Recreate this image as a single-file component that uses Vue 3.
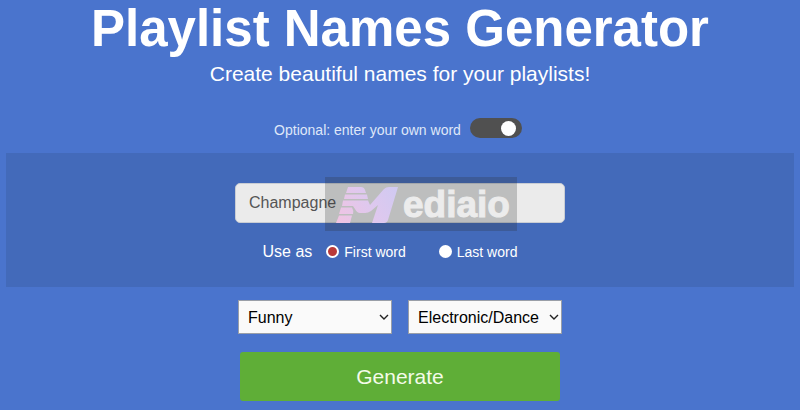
<script setup>
import { ref } from 'vue'

const useOwnWord = ref(true)
const word = ref('Champagne')
const position = ref('first')
const mood = ref('Funny')
const genre = ref('Electronic/Dance')
</script>

<template>
  <main class="page">
    <h1 class="title">Playlist Names Generator</h1>
    <p class="subtitle">Create beautiful names for your playlists!</p>

    <form class="form" @submit.prevent>
      <label class="toggle">
        <span>Optional: enter your own word</span>
        <input v-model="useOwnWord" class="switch" type="checkbox" role="switch" />
      </label>

      <section class="panel">
        <div class="field">
          <input v-model="word" class="word" type="text" aria-label="Your own word" />
          <div class="watermark">
            <svg class="mark" viewBox="0 0 60 38" aria-hidden="true">
              <defs>
                <linearGradient id="mark-fill" gradientUnits="userSpaceOnUse" x1="0" y1="38" x2="60" y2="0">
                  <stop offset="0" stop-color="#f0c4e2" />
                  <stop offset="0.5" stop-color="#dfc8ee" />
                  <stop offset="1" stop-color="#cfcaf2" />
                </linearGradient>
              </defs>
              <g fill="url(#mark-fill)">
                <path d="M10 2H23Q26 2 27 5L28 8H8Z" />
                <path d="M7 9.500H29L30 14H6Z" />
                <path d="M5 15.500H30L32 20L46 4Q48 2 51 2H60L50 35Q49 38 46 38H34L40 20L33 26Q30 28 27 28H22Q19 28 17 24L15 21H4Z" />
                <path d="M3 22.500H14Q16 26 15 29H1Z" />
                <path d="M1 30.500H14L12 38H-2Z" />
              </g>
            </svg>
            <span class="brand">ediaio</span>
          </div>
        </div>

        <div class="options" role="radiogroup" aria-labelledby="use-as">
          <span id="use-as" class="legend">Use as</span>
          <label class="option">
            <input v-model="position" class="radio" type="radio" name="position" value="first" />
            <span>First word</span>
          </label>
          <label class="option">
            <input v-model="position" class="radio" type="radio" name="position" value="last" />
            <span>Last word</span>
          </label>
        </div>
      </section>

      <div class="selects">
        <div class="select">
          <select v-model="mood" aria-label="Mood">
            <option>Funny</option>
          </select>
          <svg class="chevron" viewBox="0 0 10 6" aria-hidden="true"><path d="M1 1L5 5L9 1" /></svg>
        </div>
        <div class="select">
          <select v-model="genre" aria-label="Genre">
            <option>Electronic/Dance</option>
          </select>
          <svg class="chevron" viewBox="0 0 10 6" aria-hidden="true"><path d="M1 1L5 5L9 1" /></svg>
        </div>
      </div>

      <button class="generate" type="submit">Generate</button>
    </form>
  </main>
</template>

<style>
body {
  background: #4a74cd;
}
</style>

<style scoped>
.page {
  padding: 0 6px 8px;
  color: #fff;
  font-family: "Liberation Sans", Arial, sans-serif;
  text-align: center;
}

.title {
  margin: 0;
  font-size: 51px;
  line-height: 58px;
}

.subtitle {
  margin: 2px 0 0;
  font-size: 21px;
  line-height: 28px;
}

.form {
  display: flex;
  flex-direction: column;
  align-items: center;
}

.toggle {
  display: flex;
  align-items: center;
  gap: 9px;
  margin: 28px 0 13px;
  padding-right: 4px;
  color: #dfe7f8;
  font-size: 14px;
  line-height: 20px;
}

.toggle span {
  padding-top: 4px;
}

.switch {
  display: flex;
  align-items: center;
  appearance: none;
  width: 52px;
  height: 20px;
  margin: 0;
  padding: 0 6px;
  border-radius: 10px;
  background: #505050;
}

.switch::before {
  content: "";
  width: 15px;
  height: 15px;
  border-radius: 50%;
  background: #fff;
}

.switch:checked::before {
  margin-left: auto;
}

.panel {
  display: flex;
  flex-direction: column;
  align-items: center;
  box-sizing: border-box;
  width: 100%;
  padding: 30px 0 25px;
  background: #436aba;
}

.field {
  position: relative;
  width: 330px;
  max-width: 100%;
}

.word {
  display: block;
  box-sizing: border-box;
  width: 100%;
  height: 40px;
  padding: 0 13px;
  border: 1px solid #c9cdd4;
  border-radius: 5px;
  background: #ebebeb;
  color: #555;
  font: 16px "Liberation Sans", Arial, sans-serif;
}

.watermark {
  position: absolute;
  top: -6px;
  left: 90px;
  display: flex;
  align-items: center;
  gap: 5px;
  box-sizing: border-box;
  width: 192px;
  height: 54px;
  padding-left: 13px;
  background: rgba(40, 45, 45, 0.24);
  pointer-events: none;
}

.mark {
  width: 60px;
  height: 38px;
  overflow: visible;
}

.brand {
  padding-top: 2px;
  color: #ececec;
  font-size: 37px;
  font-weight: 700;
  line-height: 40px;
  -webkit-text-stroke: 1px #ececec;
}

.options {
  display: flex;
  align-items: center;
  margin-top: 18px;
  padding-right: 20px;
  line-height: 20px;
}

.legend {
  margin-right: 14px;
  font-size: 16px;
}

.option {
  display: flex;
  align-items: center;
  gap: 5px;
  font-size: 14px;
}

.option span {
  padding-top: 1px;
}

.option + .option {
  margin-left: 33px;
}

.radio {
  appearance: none;
  box-sizing: border-box;
  width: 13px;
  height: 13px;
  margin: 0;
  border: 2px solid #fff;
  border-radius: 50%;
  background: #fff;
}

.radio:checked {
  background: #b93a3a;
}

.selects {
  display: flex;
  gap: 16px;
  margin: 13px 0 18px;
}

.select {
  position: relative;
  width: 154px;
}

.select select {
  appearance: none;
  display: block;
  box-sizing: border-box;
  width: 100%;
  height: 34px;
  padding: 0 0 0 9px;
  border: 1px solid #9a9fa8;
  border-radius: 0;
  background: #fafafa;
  color: #000;
  font: 16px "Liberation Sans", Arial, sans-serif;
}

.chevron {
  position: absolute;
  top: 14px;
  right: 3px;
  width: 10px;
  height: 6px;
  fill: none;
  stroke: #222;
  stroke-width: 1.4;
  pointer-events: none;
}

.generate {
  width: 320px;
  max-width: 100%;
  height: 49px;
  border: 0;
  border-radius: 3px;
  background: #5fae37;
  color: #f4fbe9;
  font: 21px "Liberation Sans", Arial, sans-serif;
}
</style>
